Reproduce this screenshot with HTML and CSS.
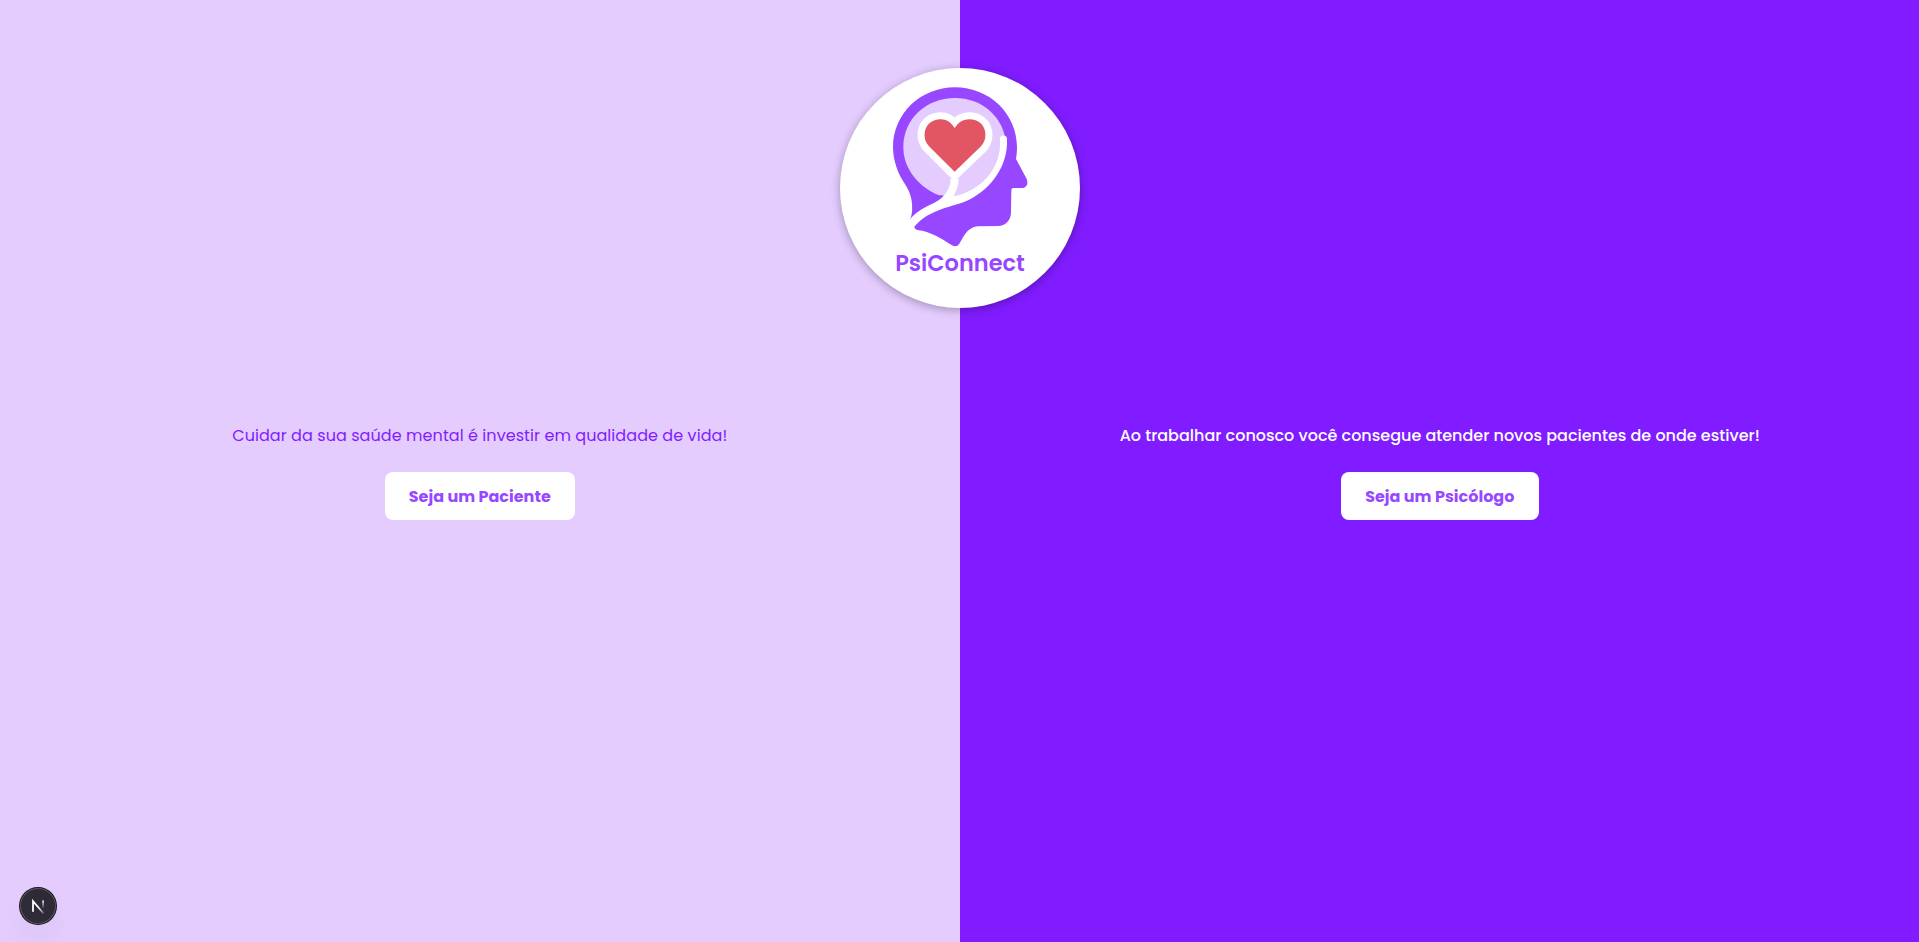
FILE: index.html
```html
<!DOCTYPE html>
<html lang="pt-BR">
<head>
<meta charset="utf-8">
<title>PsiConnect</title>
<link rel="stylesheet" href="styles.css">
</head>
<body>
<main class="split">
  <section class="panel panel-patient">
    <p class="lead lead-patient">Cuidar da sua saúde mental é investir em qualidade de vida!</p>
    <button class="cta cta-patient"><span>Seja um Paciente</span></button>
  </section>
  <section class="panel panel-psychologist">
    <p class="lead lead-psychologist">Ao trabalhar conosco você consegue atender novos pacientes de onde estiver!</p>
    <button class="cta cta-psychologist"><span>Seja um Psicólogo</span></button>
  </section>
</main>
<div class="logo">
  <svg viewBox="30 39 720 720" width="240" height="240" role="img" aria-label="PsiConnect">
    <path class="head" d="M375 97C478 97 561 176 561 277C561 290 560 302 558 312L589 370C597 386 589 399 575 399L550 399Q544 399 544 406L543 472C543 496 527 513 504 513L446 514C423 515 409 530 399 547L388 566Q380 578 366 571C332 549 302 530 262 525Q249 521 255 511L241 491C247 477 247 460 246 446C244 420 234 401 221 381C204 355 189 317 189 277C189 176 272 97 375 97Z"/>
    <path class="brain" d="M375 129C456 129 520 185 528 262C526 340 480 405 400 428L371 432L343 425C337 418 332 423 325 420C270 398 220 345 220 277C220 190 290 129 375 129Z"/>
    <path class="stem" d="M510 252A10.5 10.5 0 0 1 531 252C535 330 486 400 416 435C372 456 300 460 254 514L236 514L241 491C262 468 285 456 312 444C345 428 362 400 362 370L386 370C386 390 379 407 371 424C450 410 517 340 510 252Z"/>
    <path class="heart-outline" d="M374 350L297 274C278 254 280 222 298 205C318 188 345 190 359 202Q367 209 374 219Q381 209 389 202C405 190 434 188 452 205C470 222 472 254 453 274Z"/>
    <path class="heart" d="M374 350L297 274C278 254 280 222 298 205C318 188 345 190 359 202Q367 209 374 219Q381 209 389 202C405 190 434 188 452 205C470 222 472 254 453 274Z"/>
    <text class="wordmark" x="195.5" y="649" textLength="389" lengthAdjust="spacingAndGlyphs">PsiConnect</text>
  </svg>
</div>
<div class="dev-badge">
  <svg viewBox="0 0 36 36" width="36" height="36" aria-hidden="true">
    <defs>
      <linearGradient id="fade-diag" gradientUnits="userSpaceOnUse" x1="19" y1="19" x2="24.5" y2="25"><stop offset="0" stop-color="#fff"/><stop offset="1" stop-color="#fff" stop-opacity=".2"/></linearGradient>
      <linearGradient id="fade-bar" x1="0" y1="0" x2="0" y2="1"><stop offset="0" stop-color="#fff"/><stop offset="1" stop-color="#fff" stop-opacity="0"/></linearGradient>
    </defs>
    <path d="M13 23.7V13.2L23.6 25.5" fill="none" stroke="url(#fade-diag)" stroke-width="1.8"/>
    <rect x="22.3" y="12.4" width="1.6" height="8.4" fill="url(#fade-bar)"/>
  </svg>
</div>
</body>
</html>
```
FILE: styles.css
```css
body {
  margin: 0;
  font-family: Poppins, Inter, sans-serif;
  font-size: 16px;
}

.split {
  display: flex;
  height: 100vh;
}

.panel {
  flex: none;
  box-sizing: border-box;
  width: 50%;
  display: flex;
  flex-direction: column;
  align-items: center;
  justify-content: center;
  gap: 22px;
}

.panel-patient {
  background: #e4ccff;
}

.panel-psychologist {
  padding-left: 1px;
  background: #801cff;
}

.lead {
  margin: 0;
  line-height: 28px;
  white-space: nowrap;
}

.lead-patient {
  color: #801cff;
  letter-spacing: 0.07px;
}

.lead-psychologist {
  color: #fff;
  font-weight: 500;
}

.cta {
  height: 48px;
  padding: 0;
  border: 0;
  border-radius: 8px;
  background: #fff;
  color: #9747ff;
  font: inherit;
  font-weight: 700;
  white-space: nowrap;
}

.cta-patient {
  width: 190px;
}

.cta-psychologist {
  width: 198px;
}

.logo {
  position: absolute;
  top: 68px;
  left: 50%;
  width: 240px;
  height: 240px;
  transform: translateX(-50%);
  border-radius: 50%;
  background: #fff;
  box-shadow: 0 2px 10px rgba(0, 0, 0, 0.3);
}

.logo svg {
  display: block;
}

.head {
  fill: #9747ff;
}

.brain {
  fill: #e4ccff;
}

.stem {
  fill: #fff;
}

.heart-outline {
  fill: #fff;
  stroke: #fff;
  stroke-width: 42;
  stroke-linejoin: round;
}

.heart {
  fill: #e25563;
}

.wordmark {
  fill: #9747ff;
  font-size: 66px;
  font-weight: 600;
}

.dev-badge {
  position: absolute;
  left: 20px;
  bottom: 18px;
  width: 36px;
  height: 36px;
  border-radius: 50%;
  background: #2f2a38;
  box-shadow: 0 0 0 1px #171717, inset 0 0 0 1px #58515f, 0 16px 32px -8px rgba(0, 0, 0, 0.14);
}

.dev-badge svg {
  display: block;
}
```
